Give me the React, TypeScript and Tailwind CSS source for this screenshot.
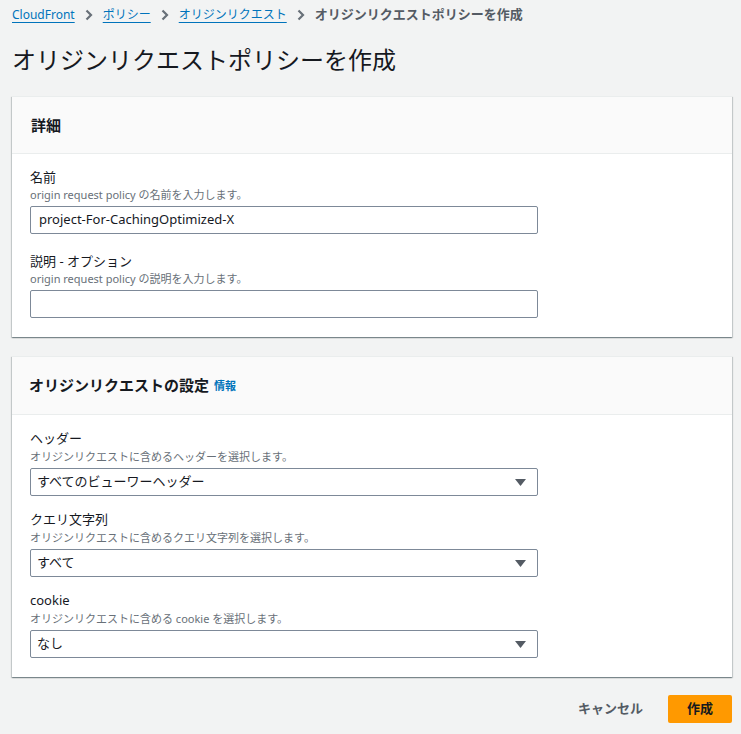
import React from "react";

const FONT = { fontFamily: '"Noto Sans", "Noto Sans CJK JP", sans-serif' };

function Chevron() {
  return (
    <svg width="8" height="12" viewBox="0 0 8 12" className="mx-[10px]">
      <path d="M1.5 1.5 L6 6 L1.5 10.5" fill="none" stroke="#687078" strokeWidth="2.2" />
    </svg>
  );
}

function Caret() {
  return (
    <svg width="11" height="7" viewBox="0 0 11 7">
      <path d="M0 0 H11 L5.5 7 Z" fill="#545b64" />
    </svg>
  );
}

function Field({
  label,
  desc,
  descLh,
  children,
}: {
  label: string;
  desc: React.ReactNode;
  descLh: string;
  children: React.ReactNode;
}) {
  return (
    <div className="flex flex-col">
      <div className="text-[13px] leading-[20px] text-[#16191f]">{label}</div>
      <div className={`text-[11px] text-[#687078] ${descLh}`}>{desc}</div>
      <div className="mt-[3px]">{children}</div>
    </div>
  );
}

function TextInput({ value }: { value: string }) {
  return (
    <div className="w-[508px] h-[28px] border border-[#7d8998] rounded-[2px] bg-white flex items-center px-[8px] text-[13px] text-[#16191f]">
      {value}
    </div>
  );
}

function Select({ value }: { value: string }) {
  return (
    <div className="w-[508px] h-[28px] border border-[#7d8998] rounded-[2px] bg-white flex items-center justify-between pl-[6px] pr-[11px] text-[13px] text-[#16191f]">
      <span>{value}</span>
      <Caret />
    </div>
  );
}

const CARD =
  "bg-white border-t border-[#eaeded] shadow-[0_1px_1px_0_rgba(0,28,36,0.3),1px_1px_1px_0_rgba(0,28,36,0.15),-1px_1px_1px_0_rgba(0,28,36,0.15)]";

export default function App() {
  return (
    <div className="min-h-[734px] bg-[#f2f3f3] pl-[12px] pr-[9px] pt-[6px]" style={FONT}>
      <nav className="flex items-center h-[18px] text-[12px]">
        <span className="text-[#0073bb] underline underline-offset-[3px]">CloudFront</span>
        <Chevron />
        <span className="text-[#0073bb] underline underline-offset-[3px]">ポリシー</span>
        <Chevron />
        <span className="text-[#0073bb] underline underline-offset-[3px]">オリジンリクエスト</span>
        <Chevron />
        <span className="text-[#545b64] font-semibold text-[13px]">オリジンリクエストポリシーを作成</span>
      </nav>
      <h1 className="mt-[20px] text-[24px] leading-[32px] text-[#16191f] font-normal">
        オリジンリクエストポリシーを作成
      </h1>

      <section className={`mt-[20px] ${CARD}`}>
        <div className="h-[57px] bg-[#fafafa] border-b border-[#eaeded] flex items-center px-[19px]">
          <h2 className="text-[15px] font-bold text-[#16191f]">詳細</h2>
        </div>
        <div className="pl-[18px] pt-[13px] pb-[19px] flex flex-col gap-[17px]">
          <Field label="名前" desc="origin request policy の名前を入力します。" descLh="leading-[16px]">
            <TextInput value="project-For-CachingOptimized-X" />
          </Field>
          <Field label="説明 - オプション" desc="origin request policy の説明を入力します。" descLh="leading-[16px]">
            <TextInput value="" />
          </Field>
        </div>
      </section>

      <section className={`mt-[19px] ${CARD}`}>
        <div className="h-[58px] bg-[#fafafa] border-b border-[#eaeded] flex items-center px-[17px]">
          <h2 className="text-[15px] font-bold text-[#16191f]">オリジンリクエストの設定</h2>
          <span className="ml-[5px] text-[11px] font-bold text-[#0073bb] mt-[1px]">情報</span>
        </div>
        <div className="pl-[18px] pt-[13px] pb-[19px] flex flex-col gap-[13px]">
          <Field label="ヘッダー" desc="オリジンリクエストに含めるヘッダーを選択します。" descLh="leading-[17px]">
            <Select value="すべてのビューワーヘッダー" />
          </Field>
          <Field label="クエリ文字列" desc="オリジンリクエストに含めるクエリ文字列を選択します。" descLh="leading-[17px]">
            <Select value="すべて" />
          </Field>
          <Field label="cookie" desc="オリジンリクエストに含める cookie を選択します。" descLh="leading-[17px]">
            <Select value="なし" />
          </Field>
        </div>
      </section>

      <div className="mt-[18px] flex items-center justify-end gap-[25px]">
        <span className="text-[13px] font-bold text-[#545b64]">キャンセル</span>
        <button className="w-[64px] h-[28px] bg-[#ff9900] rounded-[2px] text-[13px] font-bold text-[#16191f]">
          作成
        </button>
      </div>
    </div>
  );
}
